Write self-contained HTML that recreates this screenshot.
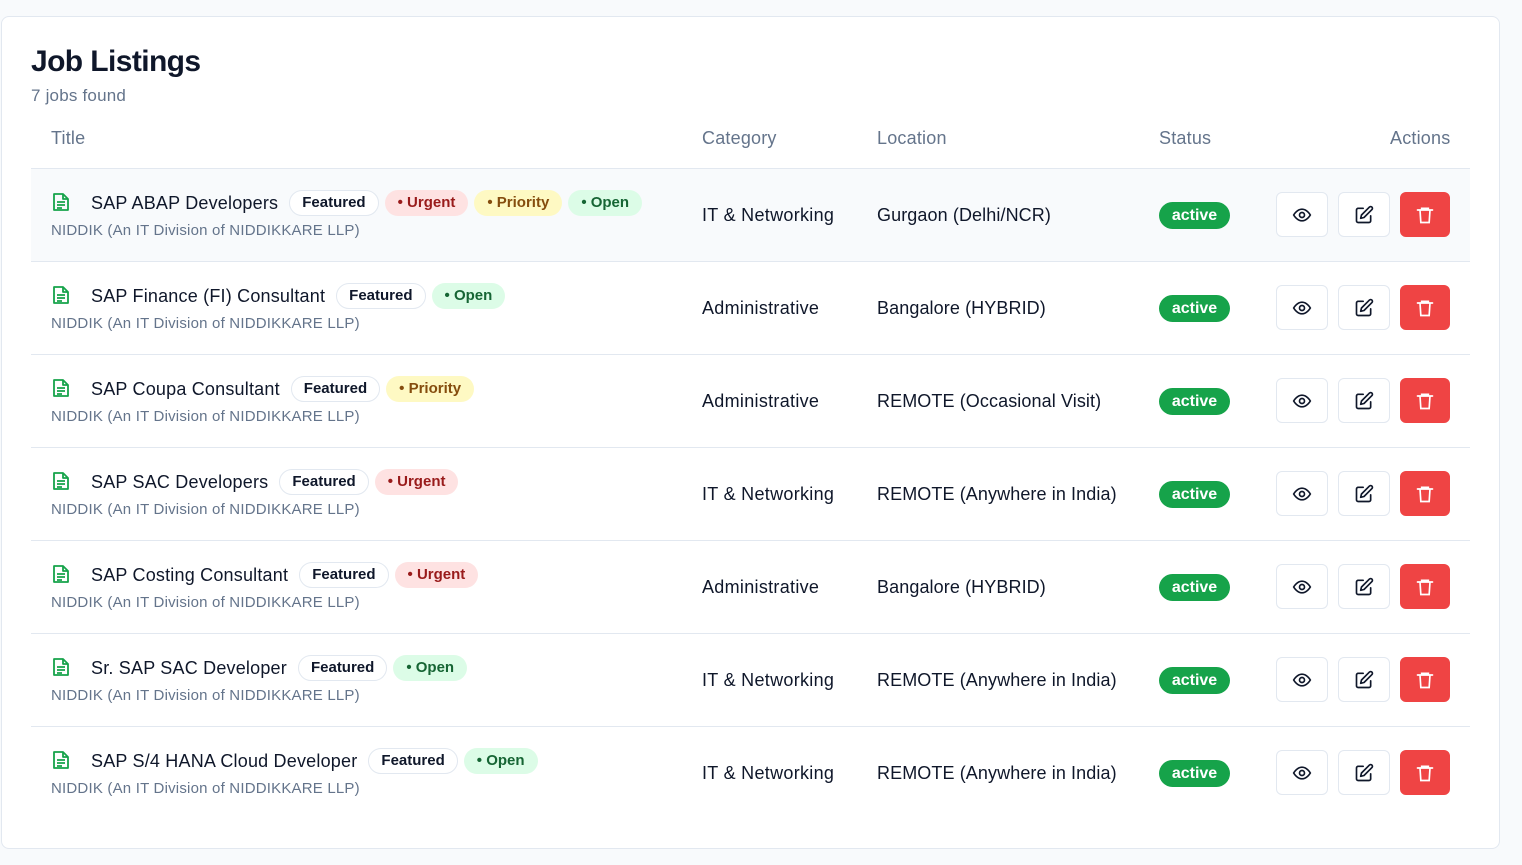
<!DOCTYPE html>
<html><head><meta charset="utf-8"><style>
*{box-sizing:border-box;margin:0;padding:0}
body{width:1522px;height:865px;background:#f8fafc;font-family:"Liberation Sans",sans-serif;color:#0f172a;overflow:hidden;position:relative}
.card{position:absolute;left:1px;top:16px;width:1499px;height:833px;background:#fff;border:1px solid #e2e8f0;border-radius:8px}
h1{position:absolute;left:31px;top:45px;font-size:30px;font-weight:700;letter-spacing:-0.6px}
.sub{position:absolute;left:31px;top:86px;font-size:17px;color:#64748b;letter-spacing:0.2px}
.th{position:absolute;top:128px;font-size:18px;color:#64748b;letter-spacing:0.2px}
.hline{position:absolute;left:31px;width:1439px;height:1px;background:#e2e8f0}
.row{position:absolute;left:31px;width:1439px;height:93px}
.icon{position:absolute;left:21px;top:23px}
.title{position:absolute;left:60px;top:21px;font-size:18px;display:flex;align-items:center;white-space:nowrap;letter-spacing:0.2px}
.b{display:inline-block;height:26px;line-height:24px;padding:0 12px;border-radius:13px;font-size:15px;font-weight:700;margin-left:6px;border:1px solid transparent;letter-spacing:0}
.f{border-color:#e2e8f0;color:#0f172a;background:#fff}
.u{background:#fee2e2;color:#991b1b}
.p{background:#fef9c3;color:#854d0e}
.o{background:#dcfce7;color:#166534}
.b:first-child{margin-left:11px}
.co{position:absolute;left:20px;top:53px;font-size:15px;color:#64748b;letter-spacing:0.2px}
.cat{position:absolute;left:671px;top:36px;font-size:18px;letter-spacing:0.3px}
.loc{position:absolute;left:846px;top:36px;font-size:18px;letter-spacing:0.1px}
.st{position:absolute;left:1128px;top:33px;height:27px;width:71px;border-radius:14px;background:#16a34a;color:#fff;font-weight:700;font-size:16px;text-align:center;line-height:27px}
.btn{position:absolute;top:23px;width:52px;height:45px;border:1px solid #e2e8f0;border-radius:6px;background:#fff;display:flex;align-items:center;justify-content:center}
.del{background:#ef4444;border-color:#ef4444;width:50px}
</style></head><body>
<div class="card"></div>
<h1>Job Listings</h1>
<div class="sub">7 jobs found</div>
<div class="th" style="left:51px">Title</div>
<div class="th" style="left:702px">Category</div>
<div class="th" style="left:877px">Location</div>
<div class="th" style="left:1159px">Status</div>
<div class="th" style="left:1390px">Actions</div>
<div class="hline" style="top:168px"></div>
<div id="rows"></div>
<script>
const d=[["SAP ABAP Developers","upo","IT &amp; Networking","Gurgaon (Delhi/NCR)"],
["SAP Finance (FI) Consultant","o","Administrative","Bangalore (HYBRID)"],
["SAP Coupa Consultant","p","Administrative","REMOTE (Occasional Visit)"],
["SAP SAC Developers","u","IT &amp; Networking","REMOTE (Anywhere in India)"],
["SAP Costing Consultant","u","Administrative","Bangalore (HYBRID)"],
["Sr. SAP SAC Developer","o","IT &amp; Networking","REMOTE (Anywhere in India)"],
["SAP S/4 HANA Cloud Developer","o","IT &amp; Networking","REMOTE (Anywhere in India)"]];
const names={u:"Urgent",p:"Priority",o:"Open"};
let h="";
d.forEach((r,i)=>{const top=169+i*93;
let bs='<span class="b f">Featured</span>';
for(const c of r[1])bs+=`<span class="b ${c}">• ${names[c]}</span>`;
h+=`<div class="row" style="top:${top}px;${i==0?'background:#f8fafc':''}">
<svg class="icon" width="18" height="20" viewBox="0 0 18 20" fill="none" stroke="#16a34a" stroke-width="1.8" stroke-linejoin="round"><path d="M2 2h9l5 5v11H2z"/><path d="M11 2v5h5M5 10h8M5 13h8M5 16h5"/></svg>
<div class="title">${r[0]}${bs}</div>
<div class="co">NIDDIK (An IT Division of NIDDIKKARE LLP)</div>
<div class="cat">${r[2]}</div><div class="loc">${r[3]}</div>
<div class="st">active</div>
<div class="btn" style="left:1245px"><svg width="20" height="20" viewBox="0 0 24 24" fill="none" stroke="#0f172a" stroke-width="2"><path d="M2 12s4-7 10-7 10 7 10 7-4 7-10 7S2 12 2 12z"/><circle cx="12" cy="12" r="3"/></svg></div>
<div class="btn" style="left:1307px"><svg width="20" height="20" viewBox="0 0 24 24" fill="none" stroke="#0f172a" stroke-width="2" stroke-linecap="round" stroke-linejoin="round"><path d="M11 4H5a2 2 0 0 0-2 2v13a2 2 0 0 0 2 2h13a2 2 0 0 0 2-2v-6"/><path d="M18.5 2.5a2.1 2.1 0 0 1 3 3L12 15l-4 1 1-4z"/></svg></div>
<div class="btn del" style="left:1369px"><svg width="20" height="20" viewBox="0 0 24 24" fill="none" stroke="#fff" stroke-width="2" stroke-linecap="round"><path d="M3 6h18M8 6V4h8v2M6 6l1 15h10l1-15"/></svg></div>
</div>`;
if(i<6)h+=`<div class="hline" style="top:${top+92}px"></div>`;});
document.getElementById("rows").innerHTML=h;
</script>
</body></html>
